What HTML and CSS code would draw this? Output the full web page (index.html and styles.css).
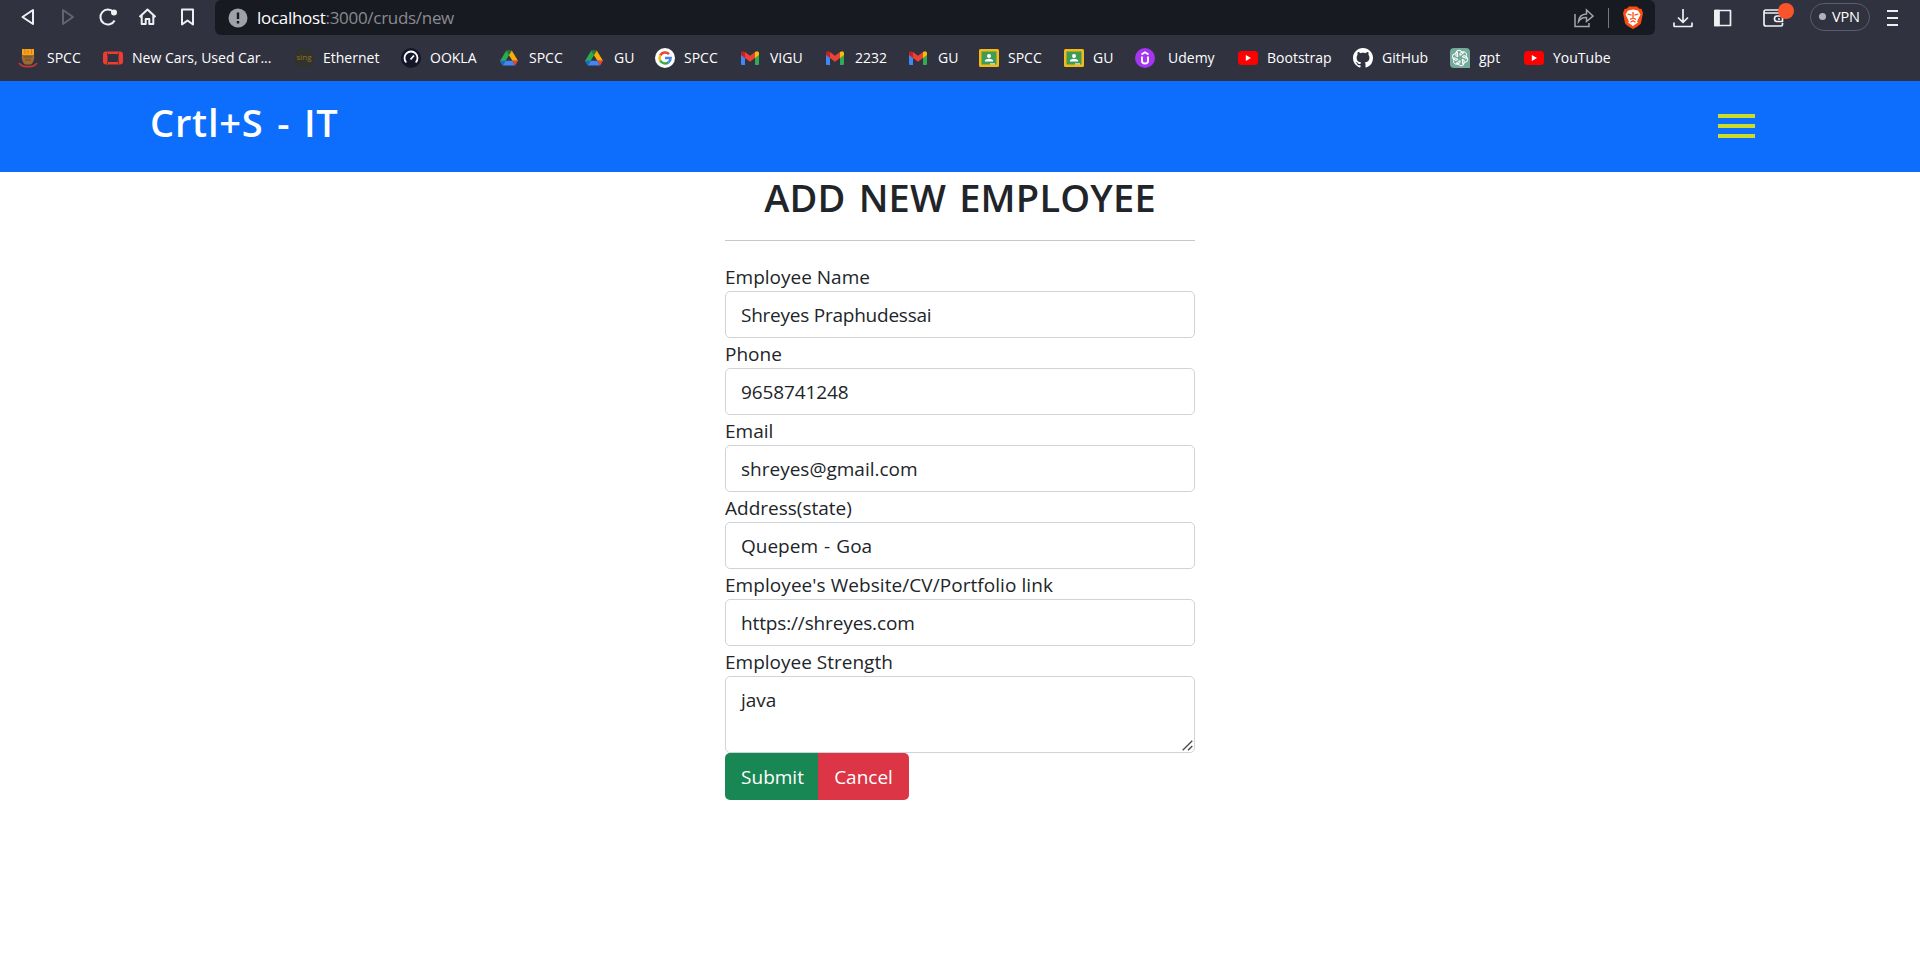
FILE: index.html
```html
<!DOCTYPE html>
<html lang="en">
<head>
<meta charset="utf-8">
<title>Crtl+S - IT</title>
<link rel="stylesheet" href="styles.css">
</head>
<body>
<svg width="0" height="0" class="defs">
  <symbol id="drive" viewBox="0 0 20 18" preserveAspectRatio="xMinYMid">
    <path d="M6.8 1h6.4L20 12h-6.2z" fill="#fbad05"/>
    <path d="M6.8 1L0 12.2l3.2 5L10 6z" fill="#2da94f"/>
    <path d="M6.8 1h6.4L10 6z" fill="#158038"/>
    <path d="M3.2 17.4h13.6l-3-5.4H6.2z" fill="#4285f4"/>
    <path d="M0 12h6.2l-3 5.4z" fill="#1967d2"/>
    <path d="M20 12h-6.2l3 5.4z" fill="#ea4335"/>
  </symbol>
  <symbol id="gmail" viewBox="0 0 18 14" preserveAspectRatio="xMinYMid">
    <path d="M0 2v11q0 1 1 1h3V5z" fill="#4285f4"/>
    <path d="M18 2v11q0 1-1 1h-3V5z" fill="#34a853"/>
    <path d="M14 1v6l4-3V2q-.6-3-4-1z" fill="#fbbc04"/>
    <path d="M4 7V1l5 3.8L14 1v6l-5 3.8z" fill="#ea4335"/>
    <path d="M0 2v2l4 3V1Q.8-1 0 2z" fill="#c5221f"/>
  </symbol>
  <symbol id="classroom" viewBox="0 0 20 18">
    <rect width="20" height="18" rx="1.5" fill="#f5ba15"/>
    <rect x="2.500" y="2.500" width="15" height="13" fill="#3f9c55"/>
    <circle cx="10" cy="7" r="2" fill="#fff"/>
    <path d="M5.800 12.500q0-2.700 4.200-2.700t4.200 2.700z" fill="#fff"/>
    <path d="M11 15.500h5v-1.200h-5z" fill="#e8e8e8"/>
  </symbol>
  <symbol id="youtube" viewBox="0 0 20 14">
    <rect width="20" height="14" rx="3.500" fill="#f00"/>
    <path d="M7.800 4v6l5.200-3z" fill="#fff"/>
  </symbol>
</svg>

<header class="browser">
  <div class="toolbar">
    <nav class="nav">
      <svg width="24" height="24" viewBox="0 0 24 24"><path d="M17 5v14L6.500 12z"/></svg>
      <svg class="dim" width="24" height="24" viewBox="0 0 24 24"><path d="M7 5v14l10-7z"/></svg>
      <svg width="24" height="24" viewBox="0 0 24 24"><path d="M18.600 15.500A7.500 7.500 0 1 1 17.500 7"/><circle cx="18" cy="7.500" r="2" fill="#f0f0f2"/></svg>
      <svg width="24" height="24" viewBox="0 0 24 24"><path d="M3.500 12l8-7.500 8 7.500M5.700 10.500V19h4v-5h3.600v5h4v-8.500"/></svg>
      <svg width="24" height="24" viewBox="0 0 24 24"><path d="M6 4.500h11v15L11.500 15.500l-5.500 4z"/></svg>
    </nav>
    <div class="address">
      <svg width="20" height="20" viewBox="0 0 20 20"><circle cx="10" cy="10" r="9.500" fill="#9ea1aa"/><path d="M10 4.500v6.500M10 13v2.500" stroke="#181a21" stroke-width="2.400"/></svg>
      <div class="url"><span class="host">localhost</span><span>:3000/cruds/new</span></div>
      <div class="address-actions">
        <svg width="20" height="20" viewBox="0 0 20 20" class="share"><path d="M1 6v12.500h14V15M4.500 13.500Q5 6.500 12.500 6V2l6.500 6-6.500 5.500v-4Q7.500 9 4.500 13.500z"/></svg>
        <i class="divider"></i>
        <svg width="20" height="23" viewBox="0 0 20 23"><path d="M6 .5h8l2 2 2.500.5L20 7l-2 10q-.5 2-8 6-7.500-4-8-6L0 7l1.500-4L4 2.500z" fill="#fb4d13"/><path d="M5 4.500l5-1 5 1 2.500 4-3.500 7 1 1-5 3.500L5 16.500l1-1-3.500-7z" fill="#fff"/><path d="M4.500 8l4 1.200M15.500 8l-4 1.200M10 6v6M7 13.500l3-1.500 3 1.500M7.500 16.200l2.500-1.400 2.500 1.400" fill="none" stroke="#fb4d13" stroke-width="1.300"/></svg>
      </div>
    </div>
    <div class="tools">
      <svg width="20" height="20" viewBox="0 0 20 20"><path d="M10 1v13M5 9.500l5 4.800 5-4.800M1 14.500V18q0 .5.500.5h17q.5 0 .5-.5v-3.500"/></svg>
      <svg width="18" height="18" viewBox="0 0 18 18"><path d="M1 1.500h15.500v15H1z"/><path d="M1 1.500h4v15H1z" fill="#f0f0f2"/></svg>
      <span class="wallet"><svg width="22" height="20" viewBox="0 0 22 20"><path d="M19 7V3q0-1-1-1H3Q1 2 1 4v12q0 2 2 2h15q1.500 0 1.500-1.500V15M1 5h17M19.500 8h-5.500q-2.500 0-2.500 2.700T14 13.500h5.500zM15 11h2"/></svg><i class="badge"></i></span>
      <span class="vpn"><i></i>VPN</span>
      <span class="menu"><i></i><i></i><i></i></span>
    </div>
  </div>
  <div class="bookmarks">
    <a><svg width="20" height="20" viewBox="0 0 20 20"><path d="M4 1h12v6H4z" fill="#f7a614"/><path d="M7 1v5M10 2v4M13.500 1v5" stroke="#d9781c" stroke-width="1"/><path d="M4 7h12q1 6-3 9.500H7Q3 13 4 7z" fill="#9b6a35"/><path d="M6 9h8M7 12h6" stroke="#6d4d28"/><path d="M1 15q3 4 9 3.500 6 .5 9-3.500" fill="none" stroke="#c93535" stroke-width="1.800"/></svg><span>SPCC</span></a>
    <a><svg width="20" height="14" viewBox="0 0 20 14"><rect y=".5" width="20" height="13" rx="3" fill="#f03b30"/><path d="M5.500 3h9l1 1.200v5.600l-1 1.200h-9l-1-1.200V4.200z" fill="#30323f"/><path d="M4.500 1.500V4M15.500 1.500V4M4.500 10v3M15.500 10v3" stroke="#30323f" stroke-width=".7"/></svg><span>New Cars, Used Car...</span></a>
    <a><i class="sing">sing</i><span>Ethernet</span></a>
    <a><svg width="20" height="20" viewBox="0 0 20 20"><circle cx="10" cy="10" r="10" fill="#14162a"/><path d="M5.300 14.500a6.500 6.500 0 1 1 9.400 0M9.500 11.500L13 7.500" fill="none" stroke="#fff" stroke-width="1.800"/></svg><span>OOKLA</span></a>
    <a><svg width="18" height="18"><use href="#drive"/></svg><span>SPCC</span></a>
    <a><svg width="18" height="18"><use href="#drive"/></svg><span>GU</span></a>
    <a><svg width="20" height="20" viewBox="0 0 20 20"><circle cx="10" cy="10" r="10" fill="#fff"/><g fill="none" stroke-width="2.500"><path d="M5.200 7.300A5.600 5.600 0 0 1 14 6.200" stroke="#ea4335"/><path d="M5.200 12.700a5.600 5.600 0 0 1 0-5.400" stroke="#fbbc05"/><path d="M13.600 14.200a5.600 5.600 0 0 1-8.400-1.500" stroke="#34a853"/><path d="M10 10h5.600q0 2.800-2 4.200" stroke="#4285f4"/></g></svg><span>SPCC</span></a>
    <a><svg width="18" height="14"><use href="#gmail"/></svg><span>VIGU</span></a>
    <a><svg width="18" height="14"><use href="#gmail"/></svg><span>2232</span></a>
    <a><svg width="18" height="14"><use href="#gmail"/></svg><span>GU</span></a>
    <a><svg width="20" height="18"><use href="#classroom"/></svg><span>SPCC</span></a>
    <a><svg width="20" height="18"><use href="#classroom"/></svg><span>GU</span></a>
    <a class="wide-gap"><svg width="20" height="20" viewBox="0 0 20 20"><circle cx="10" cy="10" r="10" fill="#a435f0"/><path d="M7 8.500V13q0 2.500 3 2.500t3-2.500V8.500M6.500 6.500L10 4.300l3.500 2.200" fill="none" stroke="#fff" stroke-width="1.900"/></svg><span>Udemy</span></a>
    <a><svg width="20" height="14"><use href="#youtube"/></svg><span>Bootstrap</span></a>
    <a><svg width="20" height="20" viewBox="0 0 16 16"><path fill="#fff" d="M8 0C3.580 0 0 3.580 0 8c0 3.540 2.290 6.530 5.470 7.590.4.070.55-.17.55-.38 0-.19-.01-.82-.01-1.490-2.010.37-2.530-.49-2.690-.94-.09-.23-.48-.94-.82-1.130-.28-.15-.68-.52-.01-.53.63-.01 1.080.58 1.230.82.72 1.210 1.870.87 2.330.66.070-.52.28-.87.510-1.070-1.780-.2-3.640-.89-3.640-3.950 0-.87.310-1.590.82-2.150-.08-.2-.36-1.020.08-2.120 0 0 .67-.21 2.200.82.64-.18 1.320-.27 2-.27s1.360.09 2 .27c1.530-1.040 2.200-.82 2.200-.82.44 1.100.16 1.920.08 2.120.51.56.82 1.270.82 2.150 0 3.070-1.870 3.750-3.650 3.950.29.25.54.73.54 1.480 0 1.070-.01 1.930-.01 2.200 0 .21.15.46.55.38A8.010 8.010 0 0 0 16 8c0-4.420-3.580-8-8-8z"/></svg><span>GitHub</span></a>
    <a><svg width="20" height="20" viewBox="0 0 20 20"><path d="M4 0h12q4 0 4 4v16H4q-4 0-4-4V4q0-4 4-4z" fill="#74aa9c"/><g fill="none" stroke="#fff"><path id="petal" d="M10 7.500V5.300l2-1.200a3 3 0 0 1 4.300 3.700v2.700L12.200 8.700"/><use href="#petal" transform="rotate(60 10 10)"/><use href="#petal" transform="rotate(120 10 10)"/><use href="#petal" transform="rotate(180 10 10)"/><use href="#petal" transform="rotate(240 10 10)"/><use href="#petal" transform="rotate(300 10 10)"/></g></svg><span>gpt</span></a>
    <a><svg width="20" height="14"><use href="#youtube"/></svg><span>YouTube</span></a>
  </div>
</header>

<div class="navbar">
  <h1 class="brand">Crtl+S - IT</h1>
  <div class="burger"><i></i><i></i><i></i></div>
</div>

<main class="form">
  <h2 class="title">ADD NEW EMPLOYEE</h2>
  <hr>
  <label>Employee Name</label>
  <input class="name" value="Shreyes Praphudessai">
  <label>Phone</label>
  <input class="phone" value="9658741248">
  <label>Email</label>
  <input value="shreyes@gmail.com">
  <label>Address(state)</label>
  <input class="state" value="Quepem - Goa">
  <label class="website-label">Employee's Website/CV/Portfolio link</label>
  <input class="website" value="https://shreyes.com">
  <label>Employee Strength</label>
  <div class="area">
    <textarea spellcheck="false">java</textarea>
    <svg class="grip" width="11" height="11" viewBox="0 0 11 11"><path d="M.7 10.300L10.300.7M6 10.300L10.300 6"/></svg>
  </div>
  <div class="buttons"><button class="submit">Submit</button><button class="cancel">Cancel</button></div>
</main>
</body>
</html>
```

FILE: styles.css
```css
* { box-sizing: border-box; }
body { margin: 0; background: #fff; color: #212529; font-family: "Open Sans", "Noto Sans", sans-serif; overflow: hidden; }
.defs { position: absolute; }
i { font-style: normal; display: block; }

.browser { height: 81px; background: #30323f; color: #fff; }
.toolbar { display: flex; height: 35px; }
.nav { display: flex; gap: 16px; padding: 5px 0 0 16px; width: 215px; height: 35px; flex: none; }
.nav svg, .tools svg { fill: none; stroke: #f0f0f2; stroke-width: 2; stroke-linejoin: round; flex: none; }
.nav svg.dim { stroke: #62646f; }
.address { display: flex; align-items: center; width: 1440px; height: 35px; padding: 0 12px 0 13px; background: #181a21; border-radius: 6px; flex: none; }
.url { flex: 1; margin-left: 9px; font-size: 17px; line-height: 24px; letter-spacing: -0.3px; color: #898b92; }
.host { color: #fff; }
.address-actions { display: flex; align-items: center; gap: 14px; }
.share { fill: none; stroke: #a5a6ab; stroke-width: 1.5; }
.divider { width: 1px; height: 20px; background: #77787e; }
.tools { display: flex; align-items: center; height: 35px; padding-left: 18px; }
.tools svg { stroke-width: 1.7; }
.tools > svg + svg { margin-left: 21px; }
.wallet { position: relative; height: 20px; margin-left: 31px; }
.badge { position: absolute; left: 15px; top: -5px; width: 16px; height: 16px; border-radius: 50%; background: #fb542b; }
.vpn { display: flex; align-items: center; gap: 6px; width: 60px; height: 28px; margin: 0 0 2px 25px; padding-left: 8px; border: 1px solid #5b5d70; border-radius: 14px; font-size: 14.500px; letter-spacing: -0.2px; flex: none; }
.vpn i { width: 7px; height: 7px; border-radius: 50%; background: #b0b1c3; }
.menu { display: grid; gap: 5px; margin-left: 17px; }
.menu i { width: 11px; height: 2px; background: #f0f0f2; }

.bookmarks { display: grid; grid-template-columns: 85px 191px 107px 99px 85px 70px 86px 85px 83px 70px 85px 71px 103px 115px 97px 74px 100px; height: 44px; padding-left: 18px; }
.bookmarks a { display: grid; grid-template-columns: 20px auto; column-gap: 9px; align-items: center; justify-content: start; height: 46px; font-size: 14px; white-space: nowrap; }
.bookmarks span { margin-top: -2px; }
.bookmarks .wide-gap { column-gap: 13px; }
.sing { width: 20px; height: 20px; border-radius: 50%; background: #32322f; color: #8f7520; font-size: 8px; line-height: 18px; text-align: center; }

.navbar { display: flex; justify-content: space-between; height: 91px; padding: 0 165px 0 150px; background: #0d6efd; color: #fff; }
.brand { margin: 17px 0 0; font-size: 38px; line-height: 48px; font-weight: 600; letter-spacing: 0.8px; word-spacing: 3px; }
.burger { display: grid; align-content: start; gap: 6px; padding-top: 33px; }
.burger i { width: 37px; height: 4px; background: #cddc28; }

.form { width: 470px; margin: 0 auto; font-size: 19px; }
.title { height: 48px; margin: 1px 0 0; font-size: 38px; line-height: 48px; font-weight: 600; letter-spacing: 0.2px; word-spacing: 3px; text-align: center; white-space: nowrap; }
hr { height: 1px; margin: 19px 0 20px; border: 0; background: #c8c9ca; }
label { display: block; height: 30px; line-height: 32px; white-space: nowrap; }
input, textarea { display: block; width: 470px; height: 47px; padding: 7px 15px; border: 1px solid #ced4da; border-radius: 5px; background: #fff; color: #212529; font: 19px/30px "Open Sans", "Noto Sans", sans-serif; }
.name { letter-spacing: -0.24px; }
.phone { letter-spacing: -0.1px; }
.state { word-spacing: 1.2px; }
.website-label { letter-spacing: 0.06px; }
.website { letter-spacing: -0.14px; }
.area { position: relative; }
textarea { height: 77px; padding-top: 8px; resize: none; }
.grip { position: absolute; right: 2px; bottom: 2px; fill: none; stroke: #444; stroke-width: 1.3; }
.buttons { display: flex; }
button { height: 47px; padding: 0; border: 0; color: #fff; font: 19px/30px "Open Sans", "Noto Sans", sans-serif; }
.submit { width: 93px; padding-left: 2px; background: #198754; border-radius: 5px 0 0 5px; }
.cancel { width: 91px; background: #dc3545; border-radius: 0 5px 5px 0; }
```
